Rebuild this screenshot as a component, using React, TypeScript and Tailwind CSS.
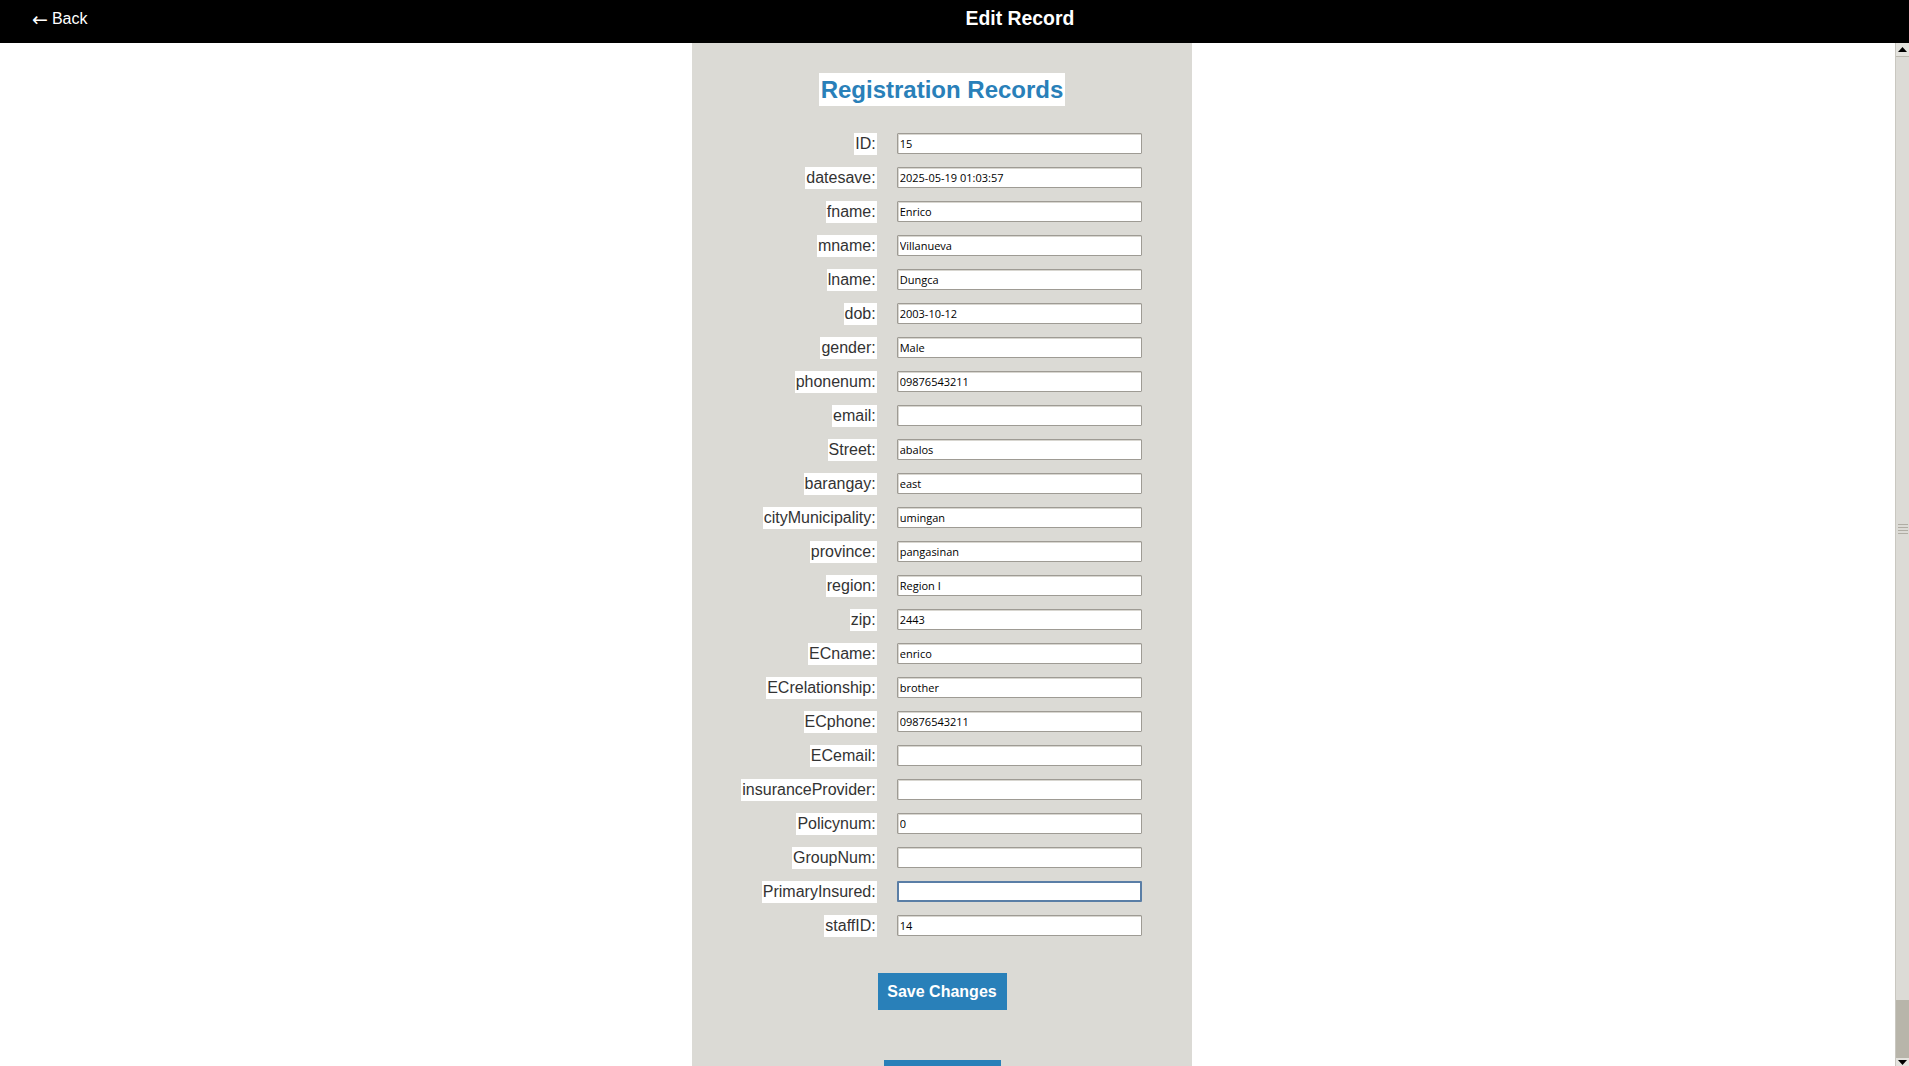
import React from "react";

const rows: [string, string][] = [
  ["ID", "15"],
  ["datesave", "2025-05-19 01:03:57"],
  ["fname", "Enrico"],
  ["mname", "Villanueva"],
  ["lname", "Dungca"],
  ["dob", "2003-10-12"],
  ["gender", "Male"],
  ["phonenum", "09876543211"],
  ["email", ""],
  ["Street", "abalos"],
  ["barangay", "east"],
  ["cityMunicipality", "umingan"],
  ["province", "pangasinan"],
  ["region", "Region I"],
  ["zip", "2443"],
  ["ECname", "enrico"],
  ["ECrelationship", "brother"],
  ["ECphone", "09876543211"],
  ["ECemail", ""],
  ["insuranceProvider", ""],
  ["Policynum", "0"],
  ["GroupNum", ""],
  ["PrimaryInsured", ""],
  ["staffID", "14"],
];

export default function App() {
  return (
    <div className="h-screen w-full overflow-hidden flex flex-col bg-white" style={{ fontFamily: '"Liberation Sans", Arial, sans-serif' }}>
      <header className="h-[43px] shrink-0 bg-black flex items-center pb-[6px] text-white">
        <a className="ml-[32px] text-[16px] leading-[18px] text-white flex items-center gap-[4px]" href="#">
          <span className="text-[19px] leading-[18px]" style={{ fontFamily: '"DejaVu Sans", sans-serif' }}>←</span>
          <span>Back</span>
        </a>
        <h1 className="ml-[878px] text-[19.4px] font-bold leading-[22px] -mt-[2px]">Edit Record</h1>
      </header>
      <div className="flex-1 flex min-h-0">
        <main className="flex-1 min-w-0 overflow-hidden">
          <div className="ml-[692px] w-[500px] bg-[#dbdad5] pt-[30px] pb-[60px] flex flex-col items-center">
            <h2 className="bg-white px-[2px] h-[33px] leading-[33px] text-[24px] font-bold text-[#2980b9]">
              Registration Records
            </h2>
            <form className="mt-[27px] mr-[1px] grid grid-cols-[auto_245px] gap-x-[20px] gap-y-[12px] items-start">
              {rows.map(([label, value]) => {
                const focused = label === "PrimaryInsured";
                return (
                  <React.Fragment key={label}>
                    <label className="justify-self-end bg-white px-[1px] h-[22px] leading-[22px] text-[16px] text-[#333333]">
                      {label}:
                    </label>
                    <input
                      readOnly
                      defaultValue={value}
                      className={
                        focused
                          ? "h-[21px] w-[245px] bg-white border-2 border-[#5a7ea6] rounded-[1px] px-[1px] text-[11px] text-black outline-none"
                          : "h-[21px] w-[245px] bg-white border border-[#9e9b94] shadow-[inset_1px_1px_0_#d8d6d0] rounded-[1px] px-[2px] text-[11px] text-black outline-none"
                      }
                      style={{ fontFamily: '"Open Sans", "Noto Sans", sans-serif' }}
                    />
                  </React.Fragment>
                );
              })}
            </form>
            <button className="mt-[36px] w-[129px] h-[37px] bg-[#2980b9] text-white text-[16px] font-bold">
              Save Changes
            </button>
            <button aria-label="Back" className="mt-[50px] w-[117px] h-[37px] bg-[#2980b9]" />
          </div>
        </main>
        <div className="w-[14px] shrink-0 flex flex-col bg-[#dcdbd6] border-l border-[#c9c7c0]">
          <div className="h-[14px] flex items-center justify-center border-b border-[#bcb9b0] bg-[#e4e3de]">
            <svg width="9" height="5" viewBox="0 0 9 5"><path d="M0 5 L4.5 0 L9 5 Z" fill="#000" /></svg>
          </div>
          <div className="flex-1 flex flex-col items-center justify-center gap-[2px] bg-[#dcdbd6]">
            <div className="w-[10px] h-px bg-[#b0ada4]" />
            <div className="w-[10px] h-px bg-[#b0ada4]" />
            <div className="w-[10px] h-px bg-[#b0ada4]" />
            <div className="w-[10px] h-px bg-[#b0ada4]" />
          </div>
          <div className="h-[58px] bg-[#b8b5aa]" />
          <div className="h-[8px] flex items-start justify-center bg-[#e4e3de]">
            <svg width="9" height="5" viewBox="0 0 9 5" className="mt-[2px]"><path d="M0 0 L4.5 5 L9 0 Z" fill="#000" /></svg>
          </div>
        </div>
      </div>
    </div>
  );
}
